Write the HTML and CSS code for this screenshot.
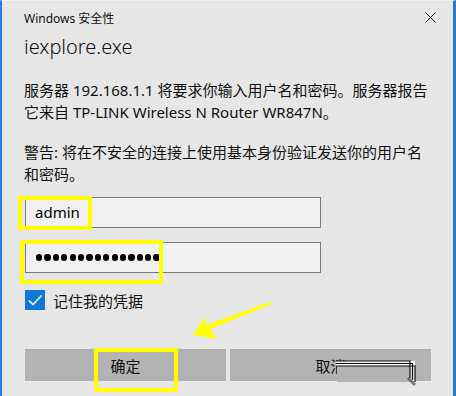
FILE: index.html
```html
<!DOCTYPE html>
<html lang="zh-CN">
<head>
<meta charset="utf-8">
<title>Windows 安全性</title>
<link rel="stylesheet" href="styles.css">
</head>
<body>
<div class="window">
  <div class="titlebar">
    <span class="title">Windows 安全性</span>
    <svg class="close" width="11" height="11" viewBox="0 0 11 11"><path d="M0.5 0.5 L10.5 10.5 M10.5 0.5 L0.5 10.5" stroke="#111" stroke-width="1" fill="none"/></svg>
  </div>
  <h1 class="app">iexplore.exe</h1>
  <p class="msg">服务器 192.168.1.1 将要求你输入用户名和密码。服务器报告<br>它来自 TP-LINK Wireless N Router WR847N。</p>
  <p class="msg warn">警告: 将在不安全的连接上使用基本身份验证发送你的用户名<br>和密码。</p>
  <div class="field user">admin</div>
  <div class="field pass">
    <span class="dot"></span><span class="dot"></span><span class="dot"></span><span class="dot"></span><span class="dot"></span><span class="dot"></span><span class="dot"></span><span class="dot"></span><span class="dot"></span><span class="dot"></span><span class="dot"></span><span class="dot"></span><span class="dot"></span><span class="dot"></span><span class="dot"></span>
  </div>
  <label class="remember">
    <span class="check"><svg width="20" height="20" viewBox="0 0 20 20"><path d="M4 10.5 L8 14.5 L16.5 5.5" stroke="#fff" stroke-width="1.6" fill="none"/></svg></span>
    <span>记住我的凭据</span>
  </label>
  <div class="buttons">
    <div class="btn">确定</div>
    <div class="btn">取消</div>
  </div>

  <div class="mark mark-user"></div>
  <div class="mark mark-pass"></div>
  <div class="mark mark-ok"></div>
  <svg class="arrow" width="90" height="45" viewBox="0 0 90 45">
    <defs><filter id="soft"><feGaussianBlur stdDeviation="0.6"/></filter></defs>
    <polygon filter="url(#soft)" fill="#ffff00" points="1,39 13,21 14,29 78,6 80,8 18,33 25,43" />
  </svg>
  <svg class="scribble" width="90" height="32" viewBox="0 0 90 32">
    <rect x="1" y="6" width="77" height="16" fill="#b3b3b3"/>
    <rect x="0" y="1" width="79" height="5" fill="#f4f4f4"/>
    <rect x="74" y="1" width="5" height="20" fill="#f4f4f4"/>
    <polyline points="0,1 74,1 74,18" stroke="#111" stroke-width="1.2" fill="none"/>
    <polyline points="0,3.5 76.5,3.5 76.5,20" stroke="#111" stroke-width="1.2" fill="none"/>
    <polyline points="0,6 79,6 79,22" stroke="#111" stroke-width="1.2" fill="none"/>
    <path d="M72 18 L79 25" stroke="#333" stroke-width="3" opacity="0.6"/>
  </svg>
</div>
</body>
</html>
```

FILE: styles.css
```css
html, body {
  margin: 0;
  padding: 0;
}
body {
  width: 456px;
  height: 396px;
  overflow: hidden;
  font-family: "Noto Sans", "Noto Sans CJK SC", sans-serif;
  color: #000;
}
.window {
  position: relative;
  box-sizing: border-box;
  width: 456px;
  height: 396px;
  background: #e6e6e6;
  border-left: 2px solid #1f7fd8;
  border-right: 3px solid #1f7fd8;
  border-top: 1px solid #f4efe9;
  padding: 0 0 0 22px;
}
.titlebar {
  height: 33px;
  display: flex;
  align-items: center;
  justify-content: space-between;
  padding-right: 17px;
}
.title {
  font-size: 12px;
  color: #111;
}
.close {
  display: block;
}
.app {
  margin: 0;
  height: 26px;
  line-height: 26px;
  font-size: 20px;
  font-weight: 300;
  color: #111;
}
.msg {
  margin: 19px 0 0;
  font-size: 15px;
  line-height: 22px;
  color: #111;
  white-space: nowrap;
}
.msg.warn {
  margin-top: 18px;
}
.field {
  box-sizing: border-box;
  margin: 12px 0 0 1px;
  width: 296px;
  height: 31px;
  border: 1px solid #7a7a7a;
  background: #f0f0f0;
  font-size: 15px;
  line-height: 29px;
  padding-left: 9px;
}
.field.pass {
  margin-top: 14px;
  display: flex;
  align-items: center;
  gap: 2.1px;
  padding-left: 10px;
}
.dot {
  width: 6.3px;
  height: 6.3px;
  border-radius: 50%;
  background: #000;
}
.remember {
  display: flex;
  align-items: center;
  gap: 8px;
  margin: 17px 0 0 1px;
  font-size: 15px;
  color: #111;
  height: 20px;
}
.check {
  width: 20px;
  height: 20px;
  background: #0f78d6;
  display: block;
}
.check svg {
  display: block;
}
.buttons {
  display: flex;
  gap: 4px;
  margin: 39px 0 0 1px;
}
.btn {
  width: 201px;
  height: 32px;
  background: #b3b3b3;
  display: flex;
  align-items: center;
  justify-content: center;
  font-size: 15px;
  color: #111;
}
.mark {
  position: absolute;
  box-sizing: border-box;
  border: 4px solid #ffff00;
}
.mark-user {
  left: 16px;
  top: 195px;
  width: 74px;
  height: 34px;
}
.mark-pass {
  left: 18px;
  top: 239px;
  width: 143px;
  height: 44px;
}
.mark-ok {
  left: 92px;
  top: 347px;
  width: 84px;
  height: 44px;
}
.arrow {
  position: absolute;
  left: 190px;
  top: 295px;
}
.scribble {
  position: absolute;
  left: 334px;
  top: 359px;
}
```
